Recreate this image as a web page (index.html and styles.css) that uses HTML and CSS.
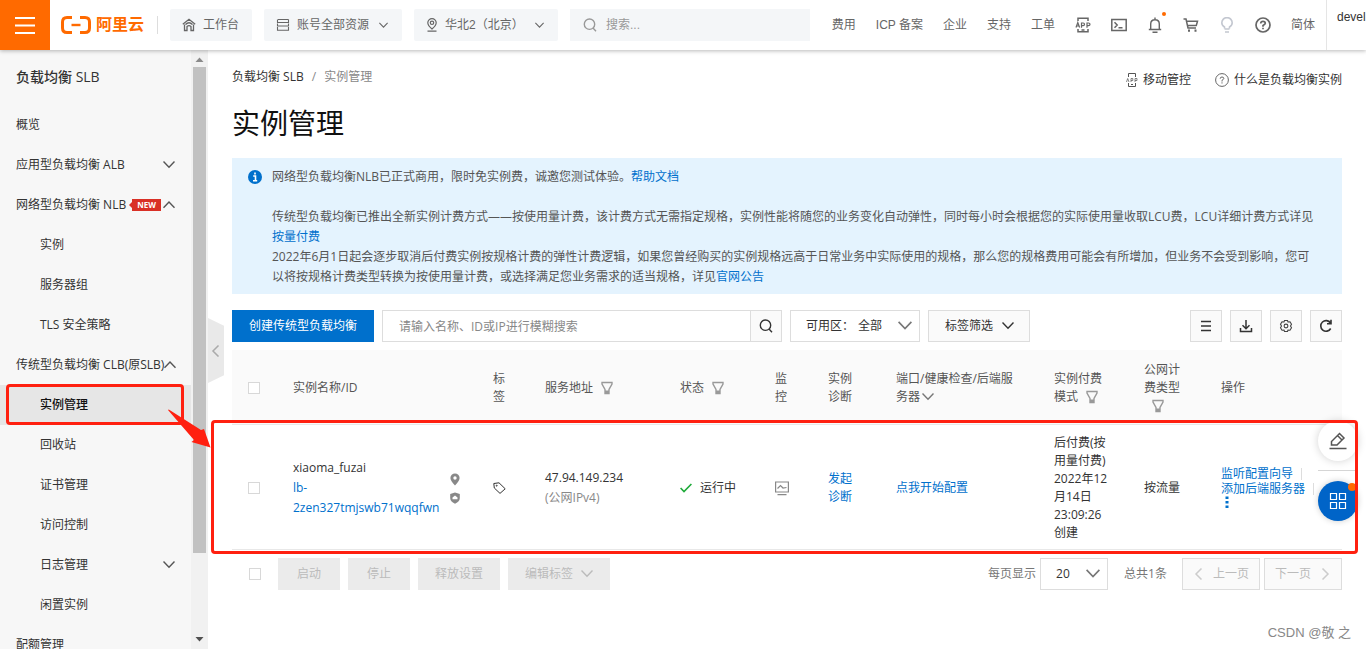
FILE: index.html
```html
<!DOCTYPE html>
<html lang="zh-CN">
<head>
<meta charset="utf-8">
<meta name="viewport" content="width=device-width, initial-scale=1">
<title>实例管理 - 负载均衡 SLB</title>
<link rel="stylesheet" href="styles.css">
</head>
<body>
<svg class="sprite" aria-hidden="true">
  <symbol id="down" viewBox="0 0 12 12"><path d="M0.500 2.500L6 8.300L11.500 2.500" fill="none" stroke="currentColor" stroke-width="1.400"/></symbol>
  <symbol id="up" viewBox="0 0 12 12"><path d="M0.500 8.800L6 3L11.500 8.800" fill="none" stroke="currentColor" stroke-width="1.400"/></symbol>
  <symbol id="left" viewBox="0 0 12 12"><path d="M8.500 0.500L3 6L8.500 11.500" fill="none" stroke="currentColor" stroke-width="1.500"/></symbol>
  <symbol id="right" viewBox="0 0 12 12"><path d="M3.500 0.500L9 6L3.500 11.500" fill="none" stroke="currentColor" stroke-width="1.500"/></symbol>
  <symbol id="filter" viewBox="0 0 12 14"><path d="M1 1.500H11V3L8 8.500V12.500H4V8.500L1 3Z" fill="none" stroke="currentColor" stroke-width="1.400"/><path d="M4 9.500H8V13H4Z" fill="currentColor"/></symbol>
  <symbol id="lens" viewBox="0 0 14 14"><circle cx="6.500" cy="6.200" r="5.200" fill="none" stroke="currentColor" stroke-width="1.400"/><path d="M10 10L13 13.200" stroke="currentColor" stroke-width="1.400"/></symbol>
  <symbol id="app" viewBox="0 0 16 16"><g fill="none" stroke="currentColor"><path d="M3 4V1.200H13V4M3 12V14.800H13V12M6.500 13H9.500" stroke-width="1.500"/><path d="M1 10.500L2.800 5.500L4.600 10.500M1.700 9H4M6.500 10.700V6H8.200Q9.500 6 9.500 7.300T8.200 8.600H6.500M12 10.700V6H13.500Q15 6 15 7.300T13.500 8.600H12" stroke-width="1.200"/></g></symbol>
</svg>

<div class="page">
  <header class="topbar">
    <button class="burger" aria-label="菜单"><svg width="20" height="17" viewBox="0 0 20 17"><path d="M0 1H20M0 8.500H20M0 16H20" stroke="#fff" stroke-width="2"/></svg></button>
    <a class="logo" href="#">
      <svg width="30" height="18" viewBox="0 0 30 18"><path d="M11 1.500H6Q1.500 1.500 1.500 6V12Q1.500 16.500 6 16.500H11M19 1.500H24Q28.500 1.500 28.500 6V12Q28.500 16.500 24 16.500H19" fill="none" stroke="#ff6a00" stroke-width="3"/><path d="M10.500 9H19.500" stroke="#ff6a00" stroke-width="2.400"/></svg>
      <span>阿里云</span>
    </a>
    <button class="pill"><svg width="14" height="14" viewBox="0 0 14 14" fill="none" stroke="currentColor" stroke-width="1.300"><path d="M0.800 6.300L7 1.300L13.200 6.300M2.500 6.500V12.500H5V8.500Q7 6.700 9 8.500V12.500H11.500V6.500M3.500 6.500Q7 3 10.500 6.500"/></svg><span>工作台</span></button>
    <button class="pill pill-menu"><svg width="14" height="14" viewBox="0 0 14 14" fill="none" stroke="currentColor" stroke-width="1.100"><path d="M2 1.500H12.500M12.500 1.500V4.500H1.500V1.500M1.500 5.500V8H12.500V5.500M1.500 9V12.200H12.500V9"/></svg><span>账号全部资源</span><svg class="mini"><use href="#down"/></svg></button>
    <button class="pill pill-menu region"><svg width="12" height="14" viewBox="0 0 12 14" fill="none" stroke="currentColor" stroke-width="1.200"><path d="M6 11Q1.800 7.500 1.800 4.800A4.200 4.200 0 0 1 10.200 4.800Q10.200 7.500 6 11ZM1.500 13.200H10.500"/><circle cx="6" cy="4.800" r="1.700"/></svg><span>华北2（北京）</span><svg class="mini"><use href="#down"/></svg></button>
    <label class="global-search"><svg width="14" height="14"><use href="#lens"/></svg><input type="text" placeholder="搜索..." aria-label="搜索"></label>
    <nav class="topnav">
      <a href="#">费用</a><a href="#">ICP 备案</a><a href="#">企业</a><a href="#">支持</a><a href="#">工单</a>
      <button aria-label="APP"><svg width="16" height="16"><use href="#app"/></svg></button>
      <button aria-label="命令行"><svg width="16" height="16" viewBox="0 0 16 16" fill="none" stroke="currentColor" stroke-width="1.500"><path d="M0.800 2.500H15.200V13.500H0.800ZM3.500 5.200L6.200 8L3.500 10.800M7.500 10.800H11.500"/></svg></button>
      <button class="bell" aria-label="消息"><svg width="16" height="16" viewBox="0 0 16 16" fill="none" stroke="currentColor" stroke-width="1.400"><path d="M3.700 12V7Q3.700 2.700 8 2.700T12.300 7V12M1.800 12.500H14.200M8 0.500V2.500M5.500 15.200H10.500"/></svg><i></i></button>
      <button aria-label="购物车"><svg width="16" height="16" viewBox="0 0 16 16" fill="none" stroke="currentColor" stroke-width="1.500"><path d="M0.500 2H3L5 11H13M3.500 4.200H14.500L13.300 8.500H4.500"/><path d="M5 12.500H7V14.700H5ZM11.500 12.500H13.500V14.700H11.500Z" fill="currentColor" stroke="none"/></svg></button>
      <button class="pale" aria-label="提示"><svg width="16" height="16" viewBox="0 0 16 16" fill="none" stroke="currentColor" stroke-width="1.600"><path d="M5.500 11.500V10Q2.800 8.500 2.800 5.800A5.200 5.200 0 0 1 13.200 5.800Q13.200 8.500 10.500 10V11.500M5.500 12H10.500M6 15H10"/></svg></button>
      <button aria-label="帮助"><svg width="16" height="16" viewBox="0 0 16 16" fill="none" stroke="currentColor" stroke-width="1.700"><circle cx="8" cy="8" r="7"/><path d="M5.700 6.500Q5.800 4.300 8 4.300T10.300 6.300Q10.300 7.300 8 8.500V9.800M8 10.800V12.300"/></svg></button>
      <a href="#">简体</a>
    </nav>
    <div class="account">devel</div>
  </header>

  <div class="body">
    <aside class="sidebar">
      <nav class="menu">
        <h2>负载均衡 SLB</h2>
        <a href="#">概览</a>
        <a href="#">应用型负载均衡 ALB<svg class="ic"><use href="#down"/></svg></a>
        <a href="#">网络型负载均衡 NLB<b class="new">NEW</b><svg class="ic"><use href="#up"/></svg></a>
        <a class="sub" href="#">实例</a>
        <a class="sub" href="#">服务器组</a>
        <a class="sub" href="#">TLS 安全策略</a>
        <a href="#">传统型负载均衡 CLB(原SLB)<svg class="ic"><use href="#up"/></svg></a>
        <a class="sub active" href="#">实例管理</a>
        <a class="sub" href="#">回收站</a>
        <a class="sub" href="#">证书管理</a>
        <a class="sub" href="#">访问控制</a>
        <a class="sub" href="#">日志管理<svg class="ic"><use href="#down"/></svg></a>
        <a class="sub" href="#">闲置实例</a>
        <a href="#">配额管理</a>
      </nav>
      <div class="scroll">
        <svg width="9" height="5" viewBox="0 0 9 5"><path d="M0.500 5L4.500 0.500L8.500 5Z" fill="#8a8a8a"/></svg>
        <div class="track"><div class="thumb"></div></div>
        <svg width="9" height="5" viewBox="0 0 9 5"><path d="M0.500 0L4.500 4.500L8.500 0Z" fill="#505050"/></svg>
      </div>
      <button class="collapse" aria-label="收起菜单"><svg width="16" height="12"><use href="#left"/></svg></button>
    </aside>

    <main class="main">
      <div class="crumbs">
        <div class="path"><a href="#">负载均衡 SLB</a><span>/</span><span>实例管理</span></div>
        <div class="links">
          <a href="#"><svg width="12" height="14" viewBox="0 0 12 14" fill="none" stroke="#555"><path d="M2.500 4V0.500H9.500V4M2.500 10V13.500H9.500V10M5 11.500H7"/><path d="M0.500 9L1.700 5.500L3 9M5 9V5.500H6.800V7.500H5M9 9V5.500H11V7.500H9" stroke-width="0.700"/></svg>移动管控</a>
          <a href="#"><svg width="14" height="14" viewBox="0 0 14 14" fill="none" stroke="#666"><circle cx="7" cy="7" r="6.400"/><path d="M5.200 5.700Q5.200 4 7 4T8.800 5.500Q8.800 6.300 7 7.300V8.500M7 9.300V10.500"/></svg>什么是负载均衡实例</a>
        </div>
      </div>
      <h1>实例管理</h1>

      <section class="notice">
        <svg width="14" height="14" viewBox="0 0 14 14"><circle cx="7" cy="7" r="7" fill="#0070cc"/><path d="M5.200 6H7.500V10.500M5 10.700H9.200M7 2.500V4.500" stroke="#fff" stroke-width="1.600" fill="none"/></svg>
        <div>
          <p>网络型负载均衡NLB已正式商用，限时免实例费，诚邀您测试体验。<a href="#">帮助文档</a></p>
          <p class="gap">传统型负载均衡已推出全新实例计费方式——按使用量计费，该计费方式无需指定规格，实例性能将随您的业务变化自动弹性，同时每小时会根据您的实际使用量收取LCU费，LCU详细计费方式详见<br><a href="#">按量付费</a></p>
          <p>2022年6月1日起会逐步取消后付费实例按规格计费的弹性计费逻辑，如果您曾经购买的实例规格远高于日常业务中实际使用的规格，那么您的规格费用可能会有所增加，但业务不会受到影响，您可<wbr>以将按规格计费类型转换为按使用量计费，或选择满足您业务需求的适当规格，详见<a href="#">官网公告</a></p>
        </div>
      </section>

      <div class="toolbar">
        <button class="primary">创建传统型负载均衡</button>
        <div class="search"><input type="text" placeholder="请输入名称、ID或IP进行模糊搜索" aria-label="搜索实例"><button aria-label="搜索"><svg width="14" height="14"><use href="#lens"/></svg></button></div>
        <label class="select zone"><span>可用区：</span><select><option>全部</option></select><svg class="ic big"><use href="#down"/></svg></label>
        <button class="tagfilter">标签筛选<svg class="ic"><use href="#down"/></svg></button>
        <div class="tools">
          <button aria-label="列表"><svg width="14" height="14" viewBox="0 0 14 14"><path d="M2 2.500H12M2 7H12M2 11.500H12" stroke="#333" stroke-width="1.500"/></svg></button>
          <button aria-label="下载"><svg width="14" height="14" viewBox="0 0 14 14" fill="none" stroke="#333" stroke-width="1.500"><path d="M7 1V9.500M3.500 6.200L7 9.700L10.500 6.200M1.500 9V12.500H12.500V9"/></svg></button>
          <button aria-label="设置"><svg width="14" height="14" viewBox="0 0 14 14" fill="none" stroke="#444" stroke-width="1.100"><path d="M5.500 1.500H8.500L9 3L11 2.800L12.500 5.200L11.500 7L12.500 8.800L11 11.200L9 11L8.500 12.500H5.500L5 11L3 11.200L1.500 8.800L2.500 7L1.500 5.200L3 2.800L5 3Z"/><circle cx="7" cy="7" r="1.900"/></svg></button>
          <button aria-label="刷新"><svg width="14" height="14" viewBox="0 0 14 14" fill="none" stroke="#333" stroke-width="1.600"><path d="M11.700 9.500A5.300 5.300 0 1 1 11.500 4M12 0.800V4.800H8"/></svg></button>
        </div>
      </div>

      <table class="grid">
        <colgroup><col class="c-check"><col><col class="c-tag"><col class="c-addr"><col class="c-status"><col class="c-mon"><col class="c-diag"><col class="c-port"><col class="c-pay"><col class="c-type"><col class="c-ops"></colgroup>
        <thead>
          <tr>
            <th><input type="checkbox" aria-label="全选"></th>
            <th>实例名称/ID</th>
            <th>标<br>签</th>
            <th>服务地址<svg class="filter"><use href="#filter"/></svg></th>
            <th>状态<svg class="filter"><use href="#filter"/></svg></th>
            <th>监<br>控</th>
            <th>实例<br>诊断</th>
            <th>端口/健康检查/后端服<br>务器<svg class="ic inl"><use href="#down"/></svg></th>
            <th>实例付费<br>模式<svg class="filter"><use href="#filter"/></svg></th>
            <th>公网计<br>费类型<br><svg class="filter"><use href="#filter"/></svg></th>
            <th>操作</th>
          </tr>
        </thead>
        <tbody>
          <tr>
            <td><input type="checkbox" aria-label="选择 xiaoma_fuzai"></td>
            <td>
              <div class="name">
                <div class="id"><span>xiaoma_fuzai</span><a href="#">lb-<br>2zen327tmjswb71wqqfwn</a></div>
                <div class="marks">
                  <svg width="12" height="13" viewBox="0 0 12 13"><path fill-rule="evenodd" d="M6 0.500A4.600 4.600 0 0 1 10.600 5.100Q10.600 7.800 6 12.500Q1.400 7.800 1.400 5.100A4.600 4.600 0 0 1 6 0.500ZM6 3.300A1.700 1.700 0 1 0 6 6.700A1.700 1.700 0 1 0 6 3.300Z" fill="#888"/></svg>
                  <svg width="12" height="12" viewBox="0 0 12 12"><path d="M6 0.500L10.800 2V6Q10.800 9.500 6 11.700Q1.200 9.500 1.200 6V2Z" fill="#888"/><path d="M3.500 7.300V5.500L6 3.500L8.500 5.500V7.300Z" fill="#fff"/></svg>
                </div>
              </div>
            </td>
            <td><svg class="tag" width="13" height="12" viewBox="0 0 13 12" fill="none" stroke="#333" stroke-width="1"><path d="M0.800 1.500L6 0.800L12.200 6.800L7 11.400L1.300 6Z"/><circle cx="3.700" cy="3.700" r="0.500"/></svg></td>
            <td class="addr">47.94.149.234<br><span>(公网IPv4)</span></td>
            <td><div class="status"><svg width="12" height="10" viewBox="0 0 12 10"><path d="M0.600 5L4 8.500L11.400 1" fill="none" stroke="#1eaa39" stroke-width="1.600"/></svg>运行中</div></td>
            <td><svg class="monitor" width="14" height="15" viewBox="0 0 14 15" fill="none" stroke="#888" stroke-width="1.200"><path d="M0.600 1H13.400V11H0.600ZM2.500 7.500L5.500 4.500L8 7L11.500 6.500M2.500 13.700H11.500"/></svg></td>
            <td><a href="#">发起<br>诊断</a></td>
            <td><a href="#">点我开始配置</a></td>
            <td class="pay">后付费(按<br>用量付费)<br>2022年12<br>月14日<br>23:09:26<br>创建</td>
            <td>按流量</td>
            <td class="ops"><a href="#">监听配置向导</a><i></i><br><a href="#">添加后端服务器</a><i></i><br><button aria-label="更多"><svg width="4" height="12" viewBox="0 0 4 12"><path d="M0.500 0.500H3.500V3H0.500ZM0.500 5H3.500V7.500H0.500ZM0.500 9.500H3.500V12H0.500Z" fill="#0070cc"/></svg></button></td>
          </tr>
        </tbody>
      </table>

      <footer class="tablefoot">
        <input type="checkbox" aria-label="全选本页">
        <button class="off" disabled>启动</button>
        <button class="off" disabled>停止</button>
        <button class="off" disabled>释放设置</button>
        <button class="off" disabled>编辑标签<svg class="ic"><use href="#down"/></svg></button>
        <div class="pager">
          <label for="size">每页显示</label>
          <div class="select size"><select id="size"><option>20</option></select><svg class="ic big"><use href="#down"/></svg></div>
          <span class="total">总共1条</span>
          <button class="step" disabled><svg class="ic"><use href="#left"/></svg>上一页</button>
          <button class="step" disabled>下一页<svg class="ic"><use href="#right"/></svg></button>
        </div>
      </footer>
    </main>
  </div>

  <div class="floaters">
    <button class="edit" aria-label="反馈"><svg width="18" height="18" viewBox="0 0 18 18" fill="none" stroke="#555" stroke-width="1.500"><path d="M2.500 13V9.500L10.500 1.500L15 6L8 13ZM8.500 3.500L13 8M0.500 16.500H17.500"/></svg></button>
    <hr>
    <button class="apps" aria-label="应用"><svg width="18" height="18" viewBox="0 0 18 18" fill="none" stroke="#fff" stroke-width="1.200"><path d="M1.500 1.500H7.500V7.500H1.500ZM10.500 1.500H16.500V7.500H10.500ZM1.500 10.500H7.500V16.500H1.500ZM10.500 10.500H16.500V16.500H10.500Z"/></svg><i></i></button>
  </div>

  <div class="mark mark-menu"></div>
  <div class="mark mark-row"></div>
  <svg class="arrow" width="44" height="40" viewBox="0 0 44 40"><path d="M1 1L1.800 0.500L34 21L37 20L43.500 38.500L24.500 33L27 31Z" fill="#ff2010"/></svg>
  <div class="watermark">CSDN @敬 之</div>
</div>
</body>
</html>
```

FILE: styles.css
```css
* { box-sizing: border-box; }

body {
  margin: 0;
  font: 12px/18px "Open Sans", "Noto Sans CJK SC", sans-serif;
  color: #333;
  background: #fff;
}

button, input, select { font: inherit; color: inherit; }
button { border: 0; padding: 0; background: none; white-space: nowrap; }
a { color: #0070cc; text-decoration: none; }
svg { flex: none; }
p, h1, h2 { margin: 0; }

.sprite { position: absolute; width: 0; height: 0; }
.page { position: relative; display: flex; flex-direction: column; height: 100vh; overflow: hidden; }
.ic { width: 12px; height: 12px; color: #555; }
.ic.big { width: 14px; height: 14px; }

/* Top bar */
.topbar {
  position: relative;
  z-index: 2;
  display: flex;
  align-items: center;
  flex: none;
  height: 50px;
  background: #fff;
  box-shadow: 0 1px 4px rgba(0, 0, 0, 0.28);
  color: #666;
  font-family: "Liberation Sans", "Noto Sans CJK SC", sans-serif;
}
.burger { display: flex; align-items: center; justify-content: center; width: 50px; height: 50px; background: #ff6a00; }
.logo { display: flex; align-items: center; gap: 5px; margin: 0 12px 0 11px; padding-right: 13px; height: 18px; border-right: 1px solid #ddd; color: #ff6a00; font-size: 16px; font-weight: 700; white-space: nowrap; }
.pill { display: flex; align-items: center; gap: 7px; height: 32px; padding: 0 13px 0 12px; margin-right: 12px; border-radius: 2px; background: #f4f6f8; flex: none; }
.pill-menu { width: 138px; padding-right: 14px; }
.pill-menu .mini { margin-left: auto; }
.region { width: 144px; }
.mini { width: 9px; height: 9px; }
.global-search { display: flex; align-items: center; flex: 0 1 240px; gap: 9px; height: 32px; padding: 0 13px; background: #f4f6f8; color: #999; }
.global-search input { flex: 1; min-width: 0; border: 0; padding: 0; outline: 0; background: none; }
.global-search input::placeholder { color: #999; opacity: 1; }
.topnav { display: flex; align-items: center; gap: 20px; margin-left: auto; padding-right: 11px; flex: none; }
.topnav a { color: #666; }
.topnav button { position: relative; display: flex; color: #666; }
.topnav .pale { color: #c3c7d0; }
.bell i { position: absolute; top: -5px; right: -3px; width: 4px; height: 4px; border-radius: 50%; background: #ff6a00; }
.account { flex: none; align-self: stretch; width: 40px; padding: 8px 0 0 10px; border-left: 1px solid #e5e5e5; overflow: hidden; color: #333; }

/* Side menu */
.body { display: flex; flex: 1; min-height: 0; }
.sidebar { position: relative; display: flex; flex: none; width: 208px; background: #f7f7f7; }
.menu { flex: 1; overflow: hidden; }
.menu h2 { padding: 18px 16px; height: 55px; font-size: 14px; font-weight: 500; line-height: 18px; }
.menu a { display: flex; align-items: center; height: 40px; padding: 0 16px; color: #333; white-space: nowrap; }
.menu .ic { margin-left: auto; }
.menu .sub { padding-left: 40px; }
.menu .active { background: #e6e6e6; color: #111; font-weight: 500; }
.new { position: relative; margin-left: 6px; padding: 0 5px; background: #d93026; color: #fff; font-size: 8px; line-height: 12px; }
.new::before { content: ""; position: absolute; left: -3px; top: 3px; border: solid transparent; border-width: 3px 3px 3px 0; border-right-color: #d93026; }
.scroll { display: flex; flex-direction: column; align-items: center; flex: none; width: 17px; padding: 7px 0; background: #f1f1f1; }
.track { flex: 1; width: 13px; padding: 5px 0; }
.thumb { height: 86%; background: #c1c1c1; }
.collapse { position: absolute; left: 100%; top: 268px; width: 16px; height: 65px; background: #e9e9e9; clip-path: polygon(0 0, 100% 12%, 100% 88%, 0 100%); color: #aaa; }
.collapse svg { display: block; }

/* Content */
.main { flex: 1; min-width: 0; padding: 17px 24px 0; }
.crumbs { display: flex; justify-content: space-between; height: 36px; white-space: nowrap; line-height: 20px; }
.path { display: flex; gap: 8px; color: #888; }
.path a, .links a { color: #333; }
.links { display: flex; align-items: center; align-self: flex-start; gap: 24px; padding-top: 3px; }
.links a { display: flex; align-items: center; gap: 5px; }
h1 { margin-bottom: 15px; font-size: 28px; font-weight: 400; line-height: 40px; color: #111; }
.notice { display: flex; gap: 10px; padding: 9px 22px 7px 16px; background: #e4f3fe; color: #555; line-height: 20px; }
.notice svg { margin-top: 3px; }
.notice .gap { margin-top: 20px; }

.toolbar { display: flex; gap: 8px; margin: 16px 0 8px; height: 32px; }
.primary { flex: none; padding: 0 17px; background: #0070cc; color: #fff; }
.search { display: flex; flex: 0 1 400px; border: 1px solid #ddd; }
.search input { flex: 1; min-width: 0; padding: 2px 16px 0; border: 0; outline: 0; }
.search input::placeholder { color: #888; opacity: 1; }
.search button { display: flex; align-items: center; justify-content: center; width: 31px; border-left: 1px solid #ddd; background: #fafafa; }
.select { position: relative; display: flex; align-items: center; flex: none; height: 32px; padding-left: 15px; border: 1px solid #ddd; background: #fff; }
.select select { flex: 1; align-self: stretch; min-width: 0; border: 0; padding: 0; outline: 0; background: none; appearance: none; }
.select .ic { position: absolute; right: 7px; pointer-events: none; color: #777; }
.zone { width: 130px; gap: 4px; }
.tagfilter { display: flex; align-items: center; gap: 9px; padding: 0 15px 0 16px; border: 1px solid #ddd; background: #fafafa; }
.tagfilter .ic { color: #333; }
.tools { display: flex; gap: 8px; margin-left: auto; }
.tools button { display: flex; align-items: center; justify-content: center; width: 32px; height: 32px; border: 1px solid #ddd; background: #fafafa; }

input[type="checkbox"] { display: block; flex: none; appearance: none; width: 12px; height: 12px; margin: 0; border: 1px solid #d8d8d8; background: #fff; }

.grid { width: 100%; table-layout: fixed; border-collapse: collapse; }
.grid th, .grid td { padding: 9px 0 7px 16px; border-bottom: 1px solid #e8e8e8; text-align: left; vertical-align: middle; font-weight: 400; white-space: nowrap; }
.grid th { padding-top: 11px; padding-bottom: 9px; background: #fafafa; color: #555; }
.c-check { width: 45px; }
.c-tag { width: 52px; }
.c-addr { width: 135px; }
.c-status { width: 95px; }
.c-mon { width: 53px; }
.c-diag { width: 68px; }
.c-port { width: 158px; }
.c-pay { width: 90px; }
.c-type { width: 77px; }
.c-ops { width: 137px; }
.filter { width: 12px; height: 14px; margin-left: 8px; color: #999; vertical-align: -3px; }
.inl { margin-left: 2px; vertical-align: -2px; color: #777; }
.name { display: flex; align-items: center; }
.id { display: flex; flex-direction: column; width: 156px; line-height: 20px; }
.marks { display: flex; flex-direction: column; gap: 6px; }
.tag, .monitor { display: block; }
.addr { line-height: 20px; }
.addr span { color: #888; }
.status { display: flex; align-items: center; gap: 8px; }
.grid .ops { line-height: 15px; }
.ops i { display: inline-block; width: 1px; height: 12px; margin-left: 8px; background: #ddd; vertical-align: middle; }
.ops button { margin-left: 4px; }
.ops button svg { display: block; }

.tablefoot { display: flex; align-items: center; gap: 8px; margin-top: 8px; height: 32px; }
.tablefoot > input { margin: 0 9px 0 17px; }
.off { display: flex; align-items: center; gap: 8px; height: 32px; padding: 0 17px; min-width: 62px; justify-content: center; background: #ebebeb; color: #bbb; }
.off .ic { color: #bbb; }
.pager { display: flex; align-items: center; gap: 4px; margin-left: auto; color: #777; white-space: nowrap; }
.size { width: 68px; color: #333; }
.total { padding: 0 11px 0 12px; }
.step { display: flex; align-items: center; gap: 8px; height: 32px; padding: 0 10px; border: 1px solid #ddd; background: #fafafa; color: #bbb; }
.step .ic { color: #ccc; }

/* Floating tools */
.floaters { position: absolute; z-index: 3; right: 8px; top: 421px; display: flex; flex-direction: column; width: 40px; }
.floaters button { position: relative; display: flex; align-items: center; justify-content: center; width: 40px; height: 40px; border-radius: 50%; }
.floaters hr { width: 100%; margin: 9px 0 10px; border: 0; border-top: 1px solid #d5d5d5; }
.edit { background: #fff; box-shadow: 0 0 8px rgba(0, 0, 0, 0.18); }
.apps { background: #0064c8; box-shadow: 0 0 6px rgba(0, 0, 0, 0.2); }
.apps i { position: absolute; top: 2px; right: 2px; width: 8px; height: 8px; border-radius: 50%; background: #ff6a00; }

/* Annotations drawn over the page */
.mark { position: absolute; z-index: 4; border: 3px solid #ff2010; border-radius: 4px; pointer-events: none; }
.mark-menu { left: 6px; top: 384px; width: 178px; height: 41px; }
.mark-row { left: 211px; right: 8px; top: 420px; height: 134px; }
.arrow { position: absolute; z-index: 4; left: 167px; top: 409px; pointer-events: none; }
.watermark { position: absolute; right: 15px; bottom: 7px; color: #888; font-size: 13px; font-family: "Liberation Sans", "Noto Sans CJK SC", sans-serif; }
```
